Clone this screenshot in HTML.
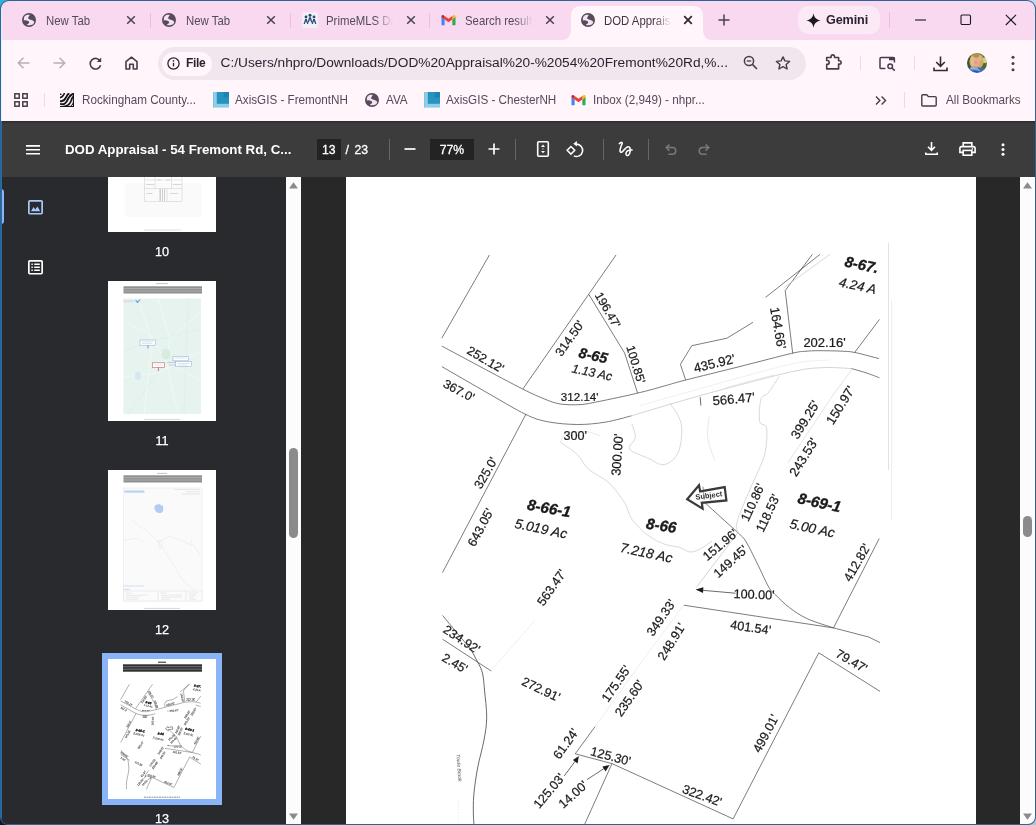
<!DOCTYPE html>
<html>
<head>
<meta charset="utf-8">
<title>DOD Appraisal</title>
<style>
*{box-sizing:border-box;margin:0;padding:0}
html,body{width:1036px;height:825px;overflow:hidden;background:#10151a;font-family:"Liberation Sans",sans-serif;}
#win{position:absolute;left:0;top:0;width:1036px;height:825px;overflow:hidden;background:#2c6496;border-radius:9px 9px 8px 8px}
#inner{position:absolute;left:1px;top:1px;width:1034px;height:823px;overflow:hidden;border-radius:8px 8px 7px 7px;background:#282828;}
.abs{position:absolute}
svg{position:absolute;overflow:visible}
/* all coordinates inside #inner are screenshot coords minus (1,1) -> use #o wrapper shifted */
#o{position:absolute;left:-1px;top:-1px;width:1036px;height:825px;opacity:0.9999}
/* ---------- tab strip ---------- */
#tabstrip{position:absolute;left:0;top:0;width:1036px;height:40px;background:#f8d9f0;}
.tabtxt{position:absolute;top:13px;height:16px;line-height:16px;font-size:12.2px;color:#544a5a;white-space:nowrap;overflow:hidden;letter-spacing:0;transform:scaleX(0.934);transform-origin:0 50%}
.tsep{position:absolute;top:13px;width:1px;height:15px;background:#eabfde}
.tx{position:absolute;top:15px;width:10px;height:10px}
/* ---------- toolbar ---------- */
#toolbar{position:absolute;left:0;top:40px;width:1036px;height:44px;background:#fff5fa;}
#bookmarks{position:absolute;left:0;top:84px;width:1036px;height:37px;background:#fff5fa;}
.bmtxt{position:absolute;top:91.8px;height:16px;line-height:16px;font-size:12.2px;color:#544a5a;white-space:nowrap;letter-spacing:0;transform:scaleX(0.958);transform-origin:0 50%}
/* ---------- pdf ---------- */
#pdfbar{position:absolute;left:0;top:121px;width:1036px;height:56px;background:#3c3c3c;}
#side{position:absolute;left:0;top:177px;width:286px;height:648px;background:#292a2d;overflow:hidden}
#sscroll{position:absolute;left:286px;top:177px;width:15px;height:648px;background:#fcfcfc}
#main{position:absolute;left:301px;top:177px;width:719px;height:648px;background:#282828;overflow:hidden}
#mscroll{position:absolute;left:1020px;top:177px;width:15px;height:648px;background:#fcfcfc}
#page{position:absolute;left:346px;top:177px;width:630px;height:648px;background:#fff;overflow:hidden}
.thumb{position:absolute;left:108px;width:108px;height:140px;background:#fff;overflow:hidden}
.tlabel{position:absolute;left:108px;width:108px;text-align:center;font-size:12.7px;line-height:14px;color:#fff;-webkit-text-stroke:0.25px #fff}
.sthumb{position:absolute;background:#8b8b8b;border-radius:5px}
.pt{position:absolute;color:#fff;white-space:nowrap}
</style>
</head>
<body>
<div class="abs" style="left:0;top:0;width:10px;height:10px;background:#2bb3de"></div><div class="abs" style="left:1026px;top:0;width:10px;height:10px;background:#c4d6f2"></div><div class="abs" style="left:0;top:815px;width:10px;height:10px;background:#0c1a22"></div><div class="abs" style="left:1026px;top:815px;width:10px;height:10px;background:#a9c9e8"></div>
<div id="win"><div id="inner"><div id="o">
<svg width="0" height="0" style="position:absolute">
 <defs>
  <symbol id="globe" viewBox="0 0 14 14">
    <circle cx="7" cy="7" r="7" fill="#564a5b"/>
    <path d="M1.9 6.4 C2.0 6.0 1.8 4.5 2.3 3.8 C2.8 3.1 3.7 2.3 4.6 2.0 C5.5 1.7 7.2 1.6 7.6 1.9 C8.0 2.2 7.0 3.0 6.8 3.6 C6.6 4.2 6.0 4.7 6.2 5.2 C6.4 5.7 6.9 6.1 7.8 6.6 C8.7 7.0 10.7 7.4 11.4 7.9 C12.1 8.4 12.2 8.8 12.1 9.4 C12.0 10.0 11.4 11.0 10.6 11.5 C9.8 12.0 7.9 12.3 7.0 12.3 C6.1 12.3 5.0 12.1 5.0 11.7 C5.0 11.3 6.7 10.7 7.0 10.1 C7.3 9.5 7.1 8.8 6.6 8.3 C6.1 7.9 5.0 7.6 4.2 7.4 C3.4 7.2 2.3 7.6 1.9 7.4 C1.5 7.2 1.9 6.6 1.9 6.4Z" fill="#f4e1f1"/>
  </symbol>
  <symbol id="xclose" viewBox="0 0 10 10">
    <path d="M1.2 1.2 L8.8 8.8 M8.8 1.2 L1.2 8.8" stroke="#4b3f52" stroke-width="1.5" fill="none"/>
  </symbol>
  <symbol id="gmail" viewBox="0 0 16 12">
    <path d="M0 1.6 L0 11 Q0 12 1 12 L3.6 12 L3.6 5.0 Z" fill="#4285f4"/>
    <path d="M16 1.6 L16 11 Q16 12 15 12 L12.4 12 L12.4 5.0 Z" fill="#34a853"/>
    <path d="M0 1.6 Q0 0 1.6 0 Q2.2 0 2.8 .5 L3.6 1.1 L3.6 5.0 L0 2.4Z" fill="#c5221f"/>
    <path d="M16 1.6 Q16 0 14.4 0 Q13.8 0 13.2 .5 L12.4 1.1 L12.4 5.0 L16 2.4Z" fill="#fbbc04"/>
    <path d="M3.6 1.1 L8 4.4 L12.4 1.1 L12.4 5.0 L8 8.3 L3.6 5.0Z" fill="#ea4335"/>
  </symbol>
 </defs>
</svg>
<div id="tabstrip">
  <div class="abs" style="left:0;top:0;width:1036px;height:1px;background:#2c6496"></div>
  <!-- tab 1 -->
  <svg style="left:22px;top:13px" width="14" height="14"><use href="#globe"/></svg>
  <div class="tabtxt" style="left:45.5px;width:72.3px">New Tab</div>
  <svg style="left:126px;top:15px" width="10" height="10"><use href="#xclose"/></svg>
  <div class="tsep" style="left:149.5px"></div>
  <!-- tab 2 -->
  <svg style="left:162px;top:13px" width="14" height="14"><use href="#globe"/></svg>
  <div class="tabtxt" style="left:185.5px;width:72.3px">New Tab</div>
  <svg style="left:266px;top:15px" width="10" height="10"><use href="#xclose"/></svg>
  <div class="tsep" style="left:290px"></div>
  <!-- tab 3 PrimeMLS -->
  <div class="abs" style="left:301.5px;top:12px;width:16px;height:15.5px;background:#f5eef9;border-radius:2px"></div>
  <svg style="left:303px;top:13px" width="14" height="13" viewBox="0 0 14 13">
    <g fill="#1f4e72">
      <circle cx="3" cy="4" r="1.4"/><circle cx="7" cy="2.2" r="1.5"/><circle cx="11" cy="4" r="1.4"/>
      <path d="M0.6 11 L2.2 6 L3.8 6 L5.4 11 L4.2 11 L3 8 L1.8 11Z"/>
      <path d="M4.6 9.6 L6.1 4.2 L7.9 4.2 L9.4 9.6 L8.2 9.6 L7 6.2 L5.8 9.6Z"/>
      <path d="M8.6 11 L10.2 6 L11.8 6 L13.4 11 L12.2 11 L11 8 L9.8 11Z"/>
    </g>
  </svg>
  <div class="tabtxt" style="left:325.5px;width:72.3px;-webkit-mask-image:linear-gradient(90deg,#000 72%,transparent 100%);mask-image:linear-gradient(90deg,#000 72%,transparent 100%)">PrimeMLS Da</div>
  <svg style="left:405.5px;top:15px" width="10" height="10"><use href="#xclose"/></svg>
  <div class="tsep" style="left:429px"></div>
  <!-- tab 4 gmail -->
  <svg style="left:440.5px;top:15px" width="15" height="10.5"><use href="#gmail"/></svg>
  <div class="tabtxt" style="left:464.5px;width:72.3px;-webkit-mask-image:linear-gradient(90deg,#000 75%,transparent 100%);mask-image:linear-gradient(90deg,#000 75%,transparent 100%)">Search results</div>
  <svg style="left:544.5px;top:15px" width="10" height="10"><use href="#xclose"/></svg>
  <!-- active tab -->
  <svg style="left:561px;top:6px" width="152" height="34" viewBox="0 0 152 34">
    <path d="M0 34 Q10 34 10 24 L10 10 Q10 0 20 0 L132 0 Q142 0 142 10 L142 24 Q142 34 152 34 Z" fill="#fff5fa"/>
  </svg>
  <svg style="left:581px;top:13px" width="14" height="14"><use href="#globe"/></svg>
  <div class="tabtxt" style="left:603.5px;width:72.3px;color:#3f3644;-webkit-mask-image:linear-gradient(90deg,#000 75%,transparent 100%);mask-image:linear-gradient(90deg,#000 75%,transparent 100%)">DOD Appraisal</div>
  <svg style="left:683px;top:15px" width="10" height="10"><path d="M1.2 1.2 L8.8 8.8 M8.8 1.2 L1.2 8.8" stroke="#2e2633" stroke-width="1.7" fill="none"/></svg>
  <!-- new tab + -->
  <svg style="left:718px;top:14px" width="12" height="12"><path d="M6 0.5 V11.5 M0.5 6 H11.5" stroke="#4b3f52" stroke-width="1.5" fill="none"/></svg>
  <!-- gemini -->
  <div class="abs" style="left:798px;top:6px;width:82px;height:28px;border-radius:10px;background:#fce9f6"></div>
  <svg style="left:806px;top:12.5px" width="15" height="15" viewBox="0 0 16 16"><path d="M8 0 C8.4 4.6 11.4 7.6 16 8 C11.4 8.4 8.4 11.4 8 16 C7.6 11.4 4.6 8.4 0 8 C4.6 7.6 7.6 4.6 8 0Z" fill="#1d1722"/></svg>
  <div class="abs" style="left:826px;top:12px;height:16px;line-height:16px;font-size:12.6px;font-weight:bold;color:#2a2230;letter-spacing:-0.1px">Gemini</div>
  <div class="tsep" style="left:888.5px;top:12px;height:16px"></div>
  <!-- window controls -->
  <svg style="left:915px;top:19px" width="12" height="2"><path d="M0 1 H11" stroke="#1d1722" stroke-width="1.1"/></svg>
  <svg style="left:960px;top:14px" width="12" height="12"><rect x="1" y="1" width="9.5" height="9.5" rx="1.2" fill="none" stroke="#1d1722" stroke-width="1.1"/></svg>
  <svg style="left:1005px;top:14px" width="12" height="12"><path d="M0.8 0.8 L11 11 M11 0.8 L0.8 11" stroke="#1d1722" stroke-width="1.1" fill="none"/></svg>
</div>
<div id="toolbar">
  <!-- back / forward (disabled) -->
  <svg style="left:17px;top:17px" width="13" height="12" viewBox="0 0 13 12"><path d="M12.5 6 H1.5 M6.5 0.8 L1.3 6 L6.5 11.2" stroke="#b9aeba" stroke-width="1.5" fill="none"/></svg>
  <svg style="left:52.5px;top:17px" width="13" height="12" viewBox="0 0 13 12"><path d="M0.5 6 H11.5 M6.5 0.8 L11.7 6 L6.5 11.2" stroke="#b9aeba" stroke-width="1.5" fill="none"/></svg>
  <!-- reload -->
  <svg style="left:89px;top:16.5px" width="13" height="13" viewBox="0 0 13 13"><path d="M11.2 4.2 A5.3 5.3 0 1 0 11.6 8.2" stroke="#463c4c" stroke-width="1.6" fill="none"/><path d="M12.2 0.6 V5 H7.8 Z" fill="#463c4c"/></svg>
  <!-- home -->
  <svg style="left:124.5px;top:16px" width="13" height="14" viewBox="0 0 13 14"><path d="M1 13 V5.6 L6.5 1.2 L12 5.6 V13 H8.3 V8.2 H4.7 V13 Z" stroke="#463c4c" stroke-width="1.6" fill="none" stroke-linejoin="round"/></svg>
  <!-- url pill -->
  <div class="abs" style="left:158px;top:7px;width:648px;height:33px;border-radius:16.5px;background:#f1e6ee"></div>
  <div class="abs" style="left:162px;top:11.5px;width:50px;height:24px;border-radius:12px;background:#fff5fa"></div>
  <svg style="left:167px;top:16.5px" width="13" height="13" viewBox="0 0 13 13"><circle cx="6.5" cy="6.5" r="5.6" stroke="#2a2230" stroke-width="1.3" fill="none"/><path d="M6.5 5.8 V9.4" stroke="#2a2230" stroke-width="1.4"/><circle cx="6.5" cy="3.8" r="0.85" fill="#2a2230"/></svg>
  <div class="abs" style="left:186px;top:15px;height:16px;line-height:16px;font-size:12px;font-weight:bold;color:#2a2230;letter-spacing:-0.3px">File</div>
  <div id="url" class="abs" style="left:220.5px;top:14px;height:18px;line-height:18px;font-size:13.7px;color:#2a2230;white-space:nowrap;letter-spacing:0">C:/Users/nhpro/Downloads/DOD%20Appraisal%20-%2054%20Fremont%20Rd,%...</div>
  <!-- zoom icon -->
  <svg style="left:743px;top:14.5px" width="15" height="15" viewBox="0 0 15 15"><circle cx="6" cy="6" r="4.6" stroke="#463c4c" stroke-width="1.5" fill="none"/><path d="M9.4 9.4 L14 14" stroke="#463c4c" stroke-width="1.6"/><path d="M3.8 6 H8.2" stroke="#463c4c" stroke-width="1.3"/></svg>
  <!-- star -->
  <svg style="left:775px;top:15px" width="16" height="15" viewBox="0 0 16 15"><path d="M8 1.9 L9.9 5.9 L14.6 6.4 L11.1 9.5 L12.1 14 L8 11.7 L3.9 14 L4.9 9.5 L1.4 6.4 L6.1 5.9 Z" stroke="#463c4c" stroke-width="1.4" fill="none" stroke-linejoin="round"/></svg>
  <!-- extensions puzzle -->
  <svg style="left:825px;top:13px" width="17" height="17" viewBox="0 0 17 17"><path d="M1.7 4.5 H6.1 V3.6 A1.7 1.7 0 0 1 9.5 3.6 V4.5 H13.6 V7.7 H14.4 A1.7 1.7 0 0 1 14.4 11.1 H13.6 V15.9 H1.7 V11.3 H2.3 A1.9 1.9 0 0 0 2.3 7.5 H1.7 Z" stroke="#463c4c" stroke-width="1.6" fill="none" stroke-linejoin="round"/></svg>
  <div class="abs" style="left:859.5px;top:16px;width:1px;height:14px;background:#efd9e9"></div>
  <!-- media search -->
  <svg style="left:879px;top:15.5px" width="17" height="15" viewBox="0 0 17 15"><path d="M6.4 12.6 H2.2 Q1 12.6 1 11.4 V2.6 Q1 1.4 2.2 1.4 H14.2 Q15.4 1.4 15.4 2.6 V6.4" stroke="#463c4c" stroke-width="1.5" fill="none"/><path d="M10 0.9 H14.4 Q15.9 0.9 15.9 2.4 V4.2 H10Z" fill="#463c4c"/><circle cx="11.2" cy="10.3" r="2.3" stroke="#463c4c" stroke-width="1.5" fill="none"/><path d="M12.9 12 L15.8 14.6" stroke="#463c4c" stroke-width="1.6"/></svg>
  <div class="abs" style="left:913.5px;top:16px;width:1px;height:14px;background:#efd9e9"></div>
  <!-- download -->
  <svg style="left:933px;top:15.5px" width="15" height="16" viewBox="0 0 15 16"><path d="M7.5 0.5 V10 M3.2 6 L7.5 10.3 L11.8 6" stroke="#332a38" stroke-width="1.6" fill="none"/><path d="M1 11.5 V14.5 H14 V11.5" stroke="#332a38" stroke-width="1.6" fill="none"/></svg>
  <!-- avatar -->
  <svg style="left:967px;top:13px" width="20" height="20" viewBox="0 0 20 20">
    <defs><clipPath id="avc"><circle cx="10" cy="10" r="10"/></clipPath><filter id="avb" x="-10%" y="-10%" width="120%" height="120%"><feGaussianBlur stdDeviation="0.7"/></filter></defs>
    <g clip-path="url(#avc)"><g filter="url(#avb)">
      <rect x="-2" y="-2" width="24" height="24" fill="#5f7440"/>
      <rect x="-2" y="-2" width="6" height="24" fill="#3f5230"/>
      <ellipse cx="17.4" cy="7.6" rx="2.6" ry="3.2" fill="#c9d486"/>
      <ellipse cx="17.6" cy="13" rx="2.4" ry="3" fill="#4c6a3a"/>
      <ellipse cx="9.4" cy="8.4" rx="7" ry="8" fill="#cfa862"/>
      <ellipse cx="6" cy="8" rx="2.6" ry="5" fill="#dcc088"/>
      <ellipse cx="13" cy="5" rx="2.6" ry="3" fill="#d9b87c"/>
      <ellipse cx="9" cy="2.6" rx="3.4" ry="1.8" fill="#b98a4a"/>
      <ellipse cx="9.6" cy="9.2" rx="3" ry="4.2" fill="#eaa88e"/>
      <ellipse cx="8.8" cy="9.6" rx="1.2" ry="1" fill="#d98c84"/>
      <path d="M-1 22 L1.5 15.6 Q9 12.6 16 15.6 L20 22Z" fill="#3e6dbd"/>
      <ellipse cx="7" cy="15.4" rx="4" ry="1.3" fill="#8fb0e4"/>
      <ellipse cx="10.6" cy="17.2" rx="2.2" ry="1.2" fill="#7ea2e0"/>
      <ellipse cx="9" cy="19" rx="3" ry="1.4" fill="#2f56a8"/>
    </g></g>
  </svg>
  <!-- kebab -->
  <svg style="left:1010.5px;top:14.5px" width="4" height="17" viewBox="0 0 4 17"><circle cx="2" cy="2.2" r="1.5" fill="#463c4c"/><circle cx="2" cy="8.5" r="1.5" fill="#463c4c"/><circle cx="2" cy="14.8" r="1.5" fill="#463c4c"/></svg>
</div>
<div id="bookmarks" style="top:84px"></div>
<!-- bookmarks content in screenshot coords -->
<svg style="left:14px;top:93px" width="14" height="14" viewBox="0 0 14 14"><g stroke="#463c4c" stroke-width="1.5" fill="none"><rect x="0.8" y="0.8" width="4.4" height="4.4"/><rect x="8.8" y="0.8" width="4.4" height="4.4"/><rect x="0.8" y="8.8" width="4.4" height="4.4"/><rect x="8.8" y="8.8" width="4.4" height="4.4"/></g></svg>
<div class="abs" style="left:43.5px;top:93px;width:1px;height:14px;background:#efd9e9"></div>
<!-- rockingham icon -->
<svg style="left:60px;top:93px" width="14" height="14" viewBox="0 0 14 14">
  <defs><clipPath id="rkc"><rect width="14" height="14"/></clipPath></defs>
  <g clip-path="url(#rkc)">
  <rect width="14" height="14" fill="#fbf7f9"/>
  <g stroke="#17131a" fill="none" stroke-linecap="butt">
    <path d="M0 1.2 L1.4 1.4" stroke-width="1.4"/>
    <path d="M0 4.6 C1.8 4.6 3.0 3.2 4.6 0.2" stroke-width="1.7"/>
    <path d="M0 8.0 C2.6 9.0 4.6 7.4 6.2 4.2 C7.2 2.2 8.0 1.0 9.2 0.2" stroke-width="1.9"/>
    <path d="M0 10.8 C3.2 12.0 5.8 10.6 7.6 6.8 C9.0 3.8 10.0 1.4 14 0.7" stroke-width="1.9"/>
  </g>
  <path d="M14 3.4 C12.2 3.6 11.8 5.4 11.0 8.0 C9.8 11.4 7.0 13.2 3.4 13.6" stroke="#17131a" stroke-width="1.7" fill="none"/>
  <path d="M0 13.5 H14 M13.4 1.6 V14" stroke="#17131a" stroke-width="1.1" fill="none"/>
  <path d="M8.6 14 C11 12.8 12.6 11 13.4 8.4 L14 8.4 L14 14Z" fill="#17131a"/>
  <circle cx="12.3" cy="12.4" r="0.55" fill="#fbf7f9"/>
  </g>
</svg>
<div class="bmtxt" style="left:81.5px">Rockingham County...</div>
<!-- axisgis 1 -->
<svg style="left:213px;top:92.2px" width="16" height="15.6" viewBox="0 0 16 15.6"><rect width="16" height="15.6" fill="#8dcfe8"/><rect x="3.8" y="0" width="12.2" height="11.8" fill="#2793be"/><rect x="10.6" y="0" width="5.4" height="5.6" fill="#1c84b4"/><rect x="0" y="0" width="0.7" height="15.6" fill="#7fbfd8"/></svg>
<div class="bmtxt" style="left:235px">AxisGIS - FremontNH</div>
<!-- AVA globe -->
<svg style="left:365px;top:93px" width="14" height="14"><use href="#globe"/></svg>
<div class="bmtxt" style="left:385.5px">AVA</div>
<!-- axisgis 2 -->
<svg style="left:424px;top:92.2px" width="16" height="15.6" viewBox="0 0 16 15.6"><rect width="16" height="15.6" fill="#8dcfe8"/><rect x="3.8" y="0" width="12.2" height="11.8" fill="#2793be"/><rect x="10.6" y="0" width="5.4" height="5.6" fill="#1c84b4"/><rect x="0" y="0" width="0.7" height="15.6" fill="#7fbfd8"/></svg>
<div class="bmtxt" style="left:446px">AxisGIS - ChesterNH</div>
<!-- gmail -->
<svg style="left:571px;top:95px" width="15" height="10.5"><use href="#gmail"/></svg>
<div class="bmtxt" style="left:593px">Inbox (2,949) - nhpr...</div>
<!-- chevrons -->
<svg style="left:875px;top:95.5px" width="12" height="9" viewBox="0 0 12 9"><path d="M1 0.6 L4.9 4.5 L1 8.4 M6.6 0.6 L10.5 4.5 L6.6 8.4" stroke="#463c4c" stroke-width="1.4" fill="none"/></svg>
<div class="abs" style="left:903.5px;top:92px;width:1px;height:16px;background:#efd9e9"></div>
<!-- folder -->
<svg style="left:921px;top:94px" width="16" height="13" viewBox="0 0 16 13"><path d="M0.8 1.8 Q0.8 0.8 1.8 0.8 H5.8 L7.4 2.6 H14.2 Q15.2 2.6 15.2 3.6 V11 Q15.2 12 14.2 12 H1.8 Q0.8 12 0.8 11 Z" stroke="#463c4c" stroke-width="1.4" fill="none" stroke-linejoin="round"/></svg>
<div class="bmtxt" style="left:945.5px">All Bookmarks</div>
<div id="pdfbar">
  <div class="abs" style="left:0;top:0;width:1036px;height:3px;background:linear-gradient(#2c2c2c,#3c3c3c)"></div>
</div>
<!-- pdf toolbar content: screenshot coords -->
<svg style="left:26px;top:144.5px" width="14" height="10" viewBox="0 0 14 10"><path d="M0 0.9 H14 M0 4.8 H14 M0 8.7 H14" stroke="#fff" stroke-width="1.6"/></svg>
<div id="ptitle" class="pt" style="left:65px;top:141px;height:18px;line-height:18px;font-size:13.3px;font-weight:bold;letter-spacing:0">DOD Appraisal - 54 Fremont Rd, C...</div>
<div class="abs" style="left:317px;top:139px;width:24px;height:21px;background:#232323"></div>
<div class="pt" style="left:322px;top:142px;-webkit-text-stroke:0.3px #fff;height:17px;line-height:17px;font-size:12.2px">13</div>
<div class="pt" style="left:345.5px;top:142px;-webkit-text-stroke:0.3px #fff;height:17px;line-height:17px;font-size:12.2px;word-spacing:2.3px">/ 23</div>
<div class="abs" style="left:389px;top:139px;width:1px;height:21px;background:#666"></div>
<svg style="left:404px;top:147.7px" width="12" height="2"><path d="M0.5 1 H11.5" stroke="#fff" stroke-width="1.7"/></svg>
<div class="abs" style="left:430px;top:139px;width:44px;height:21px;background:#232323"></div>
<div class="pt" style="left:430px;width:44px;text-align:center;top:142px;-webkit-text-stroke:0.3px #fff;height:17px;line-height:17px;font-size:12.2px">77%</div>
<svg style="left:488px;top:142.7px" width="12" height="12"><path d="M6 0.5 V11.5 M0.5 6 H11.5" stroke="#fff" stroke-width="1.7" fill="none"/></svg>
<div class="abs" style="left:514.5px;top:139px;width:1px;height:21px;background:#666"></div>
<!-- fit page -->
<svg style="left:536px;top:140px" width="14" height="18" viewBox="0 0 14 18"><rect x="1.7" y="1.7" width="10.6" height="14.5" rx="1.1" stroke="#fff" stroke-width="1.6" fill="none"/><path d="M7 4.6 L9.0 7.0 H5.0Z M7 13.3 L9.0 10.9 H5.0Z" fill="#fff"/><path d="M6 8.9 H8" stroke="#bbb" stroke-width="0.8"/></svg>
<!-- rotate -->
<svg style="left:566px;top:141px" width="18" height="17" viewBox="0 0 18 17"><path d="M4.95 5.5 L8.75 9.3 L4.95 13.1 L1.15 9.3Z" stroke="#fff" stroke-width="1.5" fill="none" stroke-linejoin="miter"/><path d="M10.4 3.1 A6.2 6.2 0 1 1 7.8 14.9" stroke="#fff" stroke-width="1.6" fill="none"/><path d="M10.9 0 V5.4 L7.3 2.7Z" fill="#fff"/></svg>
<div class="abs" style="left:603px;top:139px;width:1px;height:21px;background:#666"></div>
<!-- draw squiggle -->
<svg style="left:617px;top:141px" width="17" height="16" viewBox="0 0 17 16"><path d="M2.3 2.6 C2.6 2.4 3.7 1.5 4.2 1.4 C4.7 1.3 5.2 1.5 5.2 2.2 C5.2 2.9 4.4 4.2 4.0 5.4 C3.6 6.6 3.1 8.4 3.0 9.4 C2.9 10.4 3.2 10.9 3.6 11.2 C4.0 11.4 4.5 11.4 5.2 10.9 C5.9 10.4 6.9 9.0 7.8 8.2 C8.7 7.4 9.7 6.2 10.4 5.9 C11.2 5.6 11.8 5.8 12.3 6.2 C12.8 6.6 13.2 7.5 13.3 8.4 C13.4 9.3 13.2 10.6 12.9 11.6 C12.6 12.6 11.8 13.9 11.2 14.3 C10.6 14.7 9.9 14.5 9.5 14.2 C9.1 13.9 8.9 13.1 9.0 12.4 C9.1 11.7 9.6 10.7 10.2 10.2 C10.8 9.7 11.8 9.5 12.6 9.3 C13.4 9.1 14.7 9.1 15.1 9.0" stroke="#fff" stroke-width="1.55" fill="none" stroke-linecap="round" stroke-linejoin="round"/></svg>
<div class="abs" style="left:648px;top:139px;width:1px;height:21px;background:#666"></div>
<!-- undo / redo (disabled) -->
<svg style="left:664.5px;top:144px" width="13" height="11" viewBox="0 0 13 11"><path d="M1.6 3.6 H8.2 A3.4 3.4 0 0 1 8.2 10.2 H3.4" stroke="#787878" stroke-width="1.5" fill="none"/><path d="M4.4 0.6 L1.2 3.6 L4.4 6.6" stroke="#787878" stroke-width="1.5" fill="none"/></svg>
<svg style="left:696.5px;top:144px" width="13" height="11" viewBox="0 0 13 11"><path d="M11.4 3.6 H4.8 A3.4 3.4 0 0 0 4.8 10.2 H9.6" stroke="#787878" stroke-width="1.5" fill="none"/><path d="M8.6 0.6 L11.8 3.6 L8.6 6.6" stroke="#787878" stroke-width="1.5" fill="none"/></svg>
<!-- download / print / kebab -->
<svg style="left:924.5px;top:142px" width="13" height="13" viewBox="0 0 13 13"><path d="M6.5 0 V8 M3 4.8 L6.5 8.3 L10 4.8" stroke="#fff" stroke-width="1.6" fill="none"/><path d="M0.8 10.4 V12.2 H12.2 V10.4" stroke="#fff" stroke-width="1.6" fill="none"/></svg>
<svg style="left:958.5px;top:142px" width="17" height="14" viewBox="0 0 17 14"><path d="M4.2 4.6 V0.9 H12.8 V4.6" stroke="#fff" stroke-width="1.6" fill="none"/><path d="M4.2 10.4 H0.9 V6.4 Q0.9 4.6 2.7 4.6 H14.3 Q16.1 4.6 16.1 6.4 V10.4 H12.8" stroke="#fff" stroke-width="1.6" fill="none"/><rect x="4.2" y="8.4" width="8.6" height="4.8" stroke="#fff" stroke-width="1.6" fill="none"/><circle cx="13.4" cy="6.9" r="0.8" fill="#fff"/></svg>
<svg style="left:1001px;top:142.5px" width="4" height="13" viewBox="0 0 4 13"><circle cx="2" cy="1.8" r="1.5" fill="#fff"/><circle cx="2" cy="6.5" r="1.5" fill="#fff"/><circle cx="2" cy="11.2" r="1.5" fill="#fff"/></svg>
<div id="leftedge" class="abs" style="left:1px;top:121px;width:1px;height:704px;background:#2b6aa2;z-index:5"></div>
<div class="abs" style="left:1px;top:8px;width:1px;height:113px;background:#e4f0fc;z-index:5"></div>
<div id="side">
<div class="abs" style="left:1px;top:12px;width:3px;height:35px;background:#8ab4f8;border-radius:0 3px 3px 0"></div>
</div>
<svg style="left:27.6px;top:199.6px" width="15" height="14.6" viewBox="0 0 15 14.6"><rect x="0.85" y="0.85" width="13.3" height="12.9" rx="0.9" stroke="#a8c7fa" stroke-width="1.7" fill="none"/><path d="M3.0 11.2 L5.6 7.0 L7.3 9.6 L9.4 6.4 L12.2 11.2Z" fill="#a8c7fa"/></svg>
<svg style="left:27.6px;top:259.8px" width="15" height="14.6" viewBox="0 0 15 14.6"><rect x="0.85" y="0.85" width="13.3" height="12.9" rx="0.9" stroke="#fff" stroke-width="1.7" fill="none"/><path d="M3.4 4.3 H4.8 M6.2 4.3 H11.8 M3.4 7.3 H4.8 M6.2 7.3 H11.8 M3.4 10.3 H4.8 M6.2 10.3 H11.8" stroke="#fff" stroke-width="1.5"/></svg>
<div class="thumb" style="top:92px;height:140px;clip-path:inset(85px 0 0 0)">
<div class="abs" style="left:17px;top:91px;width:77px;height:34px;background:#fafafa"></div>
<svg style="left:0;top:0" width="108" height="140" viewBox="0 0 108 140"><g stroke="#d4d4d4" stroke-width="0.6" fill="none"><rect x="36.5" y="60" width="37.5" height="49.5"/><path d="M36.5 88 H74 M36.5 96.5 H74 M47 60 V96.5 M63.5 60 V96.5 M51.5 96.5 V109.5 M59 96.5 V109.5"/></g><g stroke="#cbcbcb" stroke-width="0.9"><path d="M52.5 97 V109 M54.5 97 V109 M56.5 97 V109"/><path d="M38 92.5 H46 M64.5 92.5 H73.5 M38.5 101.5 H44.5 M62 101.5 H70 M49 88 H53 M58 88 H62" stroke="#d2d2d2"/></g><path d="M36 138 H73" stroke="#bbb" stroke-width="0.5"/></svg>
</div>
<div class="tlabel" style="top:244.5px">10</div>
<div class="thumb" style="top:281px">
<svg style="left:0;top:0" width="108" height="140" viewBox="0 0 108 140">
<path d="M48 2.6 H60" stroke="#999" stroke-width="0.6"/>
<rect x="15.5" y="5.3" width="78.5" height="7.2" fill="#8f8f8f"/><path d="M15.5 7.6 H94 M15.5 10 H94" stroke="#cfcfcf" stroke-width="0.5"/>
<rect x="15.5" y="17.5" width="77.5" height="115.5" fill="#e6f3ee"/>
<g stroke="#f4fbf8" stroke-width="0.7" fill="none"><path d="M15.5 40 L40 52 L58 80 L93 100 M30 17.5 L44 60 L36 133 M93 30 L62 58 L58 80 L70 133 M15.5 96 L50 92 L93 70 M50 17.5 L62 58"/></g>
<g stroke="#d8ebe6" stroke-width="0.5" fill="none"><path d="M15.5 70 L44 60 L93 48 M20 133 L58 80 M80 17.5 L76 133"/></g>
<ellipse cx="58" cy="73" rx="4.5" ry="5.5" fill="#d7ecdf"/>
<ellipse cx="30" cy="95" rx="3" ry="4" fill="#d3e8f2"/>
<rect x="15.5" y="18.8" width="11" height="2.6" fill="#d3e6f2"/><path d="M27.6 19 L29.4 21.4 L32 18.6" stroke="#5aa0d8" stroke-width="1.1" fill="none"/><rect x="15.5" y="19.4" width="6" height="1.4" fill="#f3dcc0"/>
<g fill="#fff" stroke="#94add6" stroke-width="0.55"><rect x="32" y="59" width="15.5" height="5.2"/><rect x="65" y="75.3" width="15.2" height="4.5"/><rect x="67.6" y="80.6" width="16" height="5"/></g>
<path d="M40 64.2 V67.6" stroke="#5f86c6" stroke-width="0.8"/><path d="M59 81.5 H67.6 M61 84 H67.6" stroke="#9ab4da" stroke-width="0.6"/>
<rect x="44.6" y="81.8" width="12" height="4.8" fill="#fff" stroke="#c9605c" stroke-width="0.6"/><path d="M50.4 86.6 V90" stroke="#c9605c" stroke-width="0.8"/>
<path d="M34 60.8 H45.5 M34 62.4 H44 M67 77 H78.5 M69.6 82.4 H81.6 M69.6 84 H80 M46.6 84 H54.6" stroke="#b9c6de" stroke-width="0.5"/>
<path d="M36 138.4 H72" stroke="#aaa" stroke-width="0.5"/>
</svg></div>
<div class="tlabel" style="top:433.5px">11</div>
<div class="thumb" style="top:470px">
<svg style="left:0;top:0" width="108" height="140" viewBox="0 0 108 140">
<path d="M49 3.4 H59" stroke="#999" stroke-width="0.6"/>
<rect x="15.5" y="5.3" width="78.5" height="7.2" fill="#8f8f8f"/><path d="M15.5 7.6 H94 M15.5 10 H94" stroke="#cfcfcf" stroke-width="0.5"/>
<rect x="15.5" y="18" width="78.5" height="113" fill="#fafafb" stroke="#e4e4e8" stroke-width="0.5"/>
<rect x="16.4" y="20.4" width="20" height="2.3" fill="#b9d6ee"/><path d="M66 19.5 H92 M78 21.8 H92 M74 24 H92" stroke="#d9d9dd" stroke-width="0.6"/>
<path d="M46.5 39 Q46 35 49.5 34.6 Q51 33 52.5 35 Q55.5 35 55.2 39 Q55.6 42.6 52 43 Q48 43.4 46.5 39Z" fill="#b3ccf3"/>
<g stroke="#e9e9ed" stroke-width="0.7" fill="none"><path d="M22 49 L40 62 L50 72 L60 86 L76 112 L93 126 M50 72 L62 66 L72 70 L86 76 L92 84 M16 70 L30 68 L36 72 M54 70 V78 H51 V70Z M84 70 L82 76"/></g>
<path d="M15.5 116 H36" stroke="#b9d3ea" stroke-width="0.7"/><path d="M15.5 119.4 H22" stroke="#b9d3ea" stroke-width="0.7"/>
<rect x="15.5" y="121" width="78.5" height="10" fill="#fbfbfc" stroke="#e0e0e4" stroke-width="0.5"/>
<g stroke="#d6d6da" stroke-width="0.5"><path d="M18 123 H24 M18 125.2 H40 M18 127.2 H32 M18 129.2 H30 M52 123 H58 M53 125.2 H74 M53 127.2 H74 M53 129.2 H62 M80 123 H90 M81 125.2 H88 M81 127.2 H86 M81 129.2 H88 M50 121 V131 M78 121 V131"/></g>
<path d="M36 138.4 H72" stroke="#aaa" stroke-width="0.5"/>
</svg></div>
<div class="tlabel" style="top:622.5px">12</div>
<div class="abs" style="left:102px;top:653px;width:120px;height:152px;background:#8ab4f8"></div>
<div class="thumb" style="top:659px">
<svg style="left:0;top:0" width="108" height="140" viewBox="0 0 108 140">
<path d="M50 3.2 H58" stroke="#222" stroke-width="1"/>
<rect x="15" y="5.3" width="79" height="7.4" fill="#2e2e2e"/><path d="M15 7.7 H94 M15 10.2 H94" stroke="#bdbdbd" stroke-width="0.5"/>
<path d="M36 138.2 H72" stroke="#444" stroke-width="0.6" stroke-dasharray="2 0.5"/>
</svg>
<svg style="left:0;top:0" width="108" height="140" viewBox="372.6 116.7 590.5 765.4"><g font-family="Liberation Sans, sans-serif">
<path d="M489.4 255.0 L441.8 338.2" stroke="#666" stroke-width="2.8" fill="none"/>
<path d="M616.0 255.0 L523.0 388.8" stroke="#666" stroke-width="2.8" fill="none"/>
<path d="M526.0 414.0 L442.5 572.6" stroke="#666" stroke-width="2.8" fill="none"/>
<path d="M588.8 294.4 L624.6 353.0 L637.6 393.1" stroke="#666" stroke-width="2.8" fill="none"/>
<path d="M441.8 346.1 C448.2 349.5 466.5 359.3 480.0 366.5 C493.5 373.7 512.2 383.8 523.0 389.2 C533.8 394.6 538.8 396.7 545.0 399.2 C551.2 401.7 554.6 403.1 560.4 404.0 C566.2 404.9 573.8 405.0 580.0 404.6 C586.2 404.2 588.3 403.6 597.9 401.7 C607.5 399.8 626.4 395.8 637.6 393.1 C648.8 390.5 657.1 388.0 665.0 385.8 C672.9 383.6 672.5 383.4 685.0 380.2 C697.5 377.0 722.2 371.0 740.0 366.5 C757.8 362.0 780.8 355.9 791.6 353.4 C802.4 350.9 800.5 351.8 805.0 351.3 C809.5 350.9 813.0 350.7 818.8 350.7 C824.6 350.7 834.0 350.8 840.0 351.1 C846.0 351.4 848.5 351.2 855.0 352.5 C861.5 353.8 874.9 357.6 878.9 358.6" stroke="#666" stroke-width="2.8" fill="none"/>
<path d="M441.8 366.6 C449.7 371.1 475.1 385.9 489.0 393.8 C502.9 401.7 515.5 409.5 525.3 414.2 C535.1 418.9 539.3 420.1 548.0 421.8 C556.7 423.5 567.9 424.4 577.4 424.5 C586.9 424.6 596.0 423.6 605.0 422.2 C614.0 420.8 627.1 416.9 631.5 415.8" stroke="#666" stroke-width="2.8" fill="none"/>
<path d="M851.5 368.6 C853.9 369.3 861.3 371.3 866.0 372.8 C870.7 374.3 877.2 377.0 879.5 377.8" stroke="#666" stroke-width="2.8" fill="none"/>
<path d="M812.4 254.3 L785.2 290.6 L792.7 353.4" stroke="#666" stroke-width="2.8" fill="none"/>
<path d="M765.5 297.4 L820.1 254.3" stroke="#666" stroke-width="2.8" fill="none"/>
<path d="M685.6 379.8 L680.4 364.3 L691.8 345.7 L726.9 338.2 L753.0 322.3" stroke="#666" stroke-width="2.8" fill="none"/>
<path d="M879.5 319.4 L854.6 352.5" stroke="#666" stroke-width="2.8" fill="none"/>
<path d="M700.2 397.2 L700.9 405.6" stroke="#666" stroke-width="2.8" fill="none"/>
<path d="M702.0 500.1 C705.0 502.8 714.0 511.0 720.0 516.5 C726.0 522.0 733.9 528.8 738.3 533.0 C742.7 537.2 743.1 537.0 746.2 542.0 C749.3 547.0 753.2 555.4 757.0 563.0 C760.8 570.6 765.8 582.1 768.9 587.4 C772.0 592.7 772.3 591.6 775.7 595.0 C779.1 598.4 784.0 603.5 789.3 607.5 C794.6 611.5 800.0 615.4 807.4 618.8 C814.8 622.2 829.1 626.4 833.5 627.9" stroke="#666" stroke-width="2.8" fill="none"/>
<path d="M879.2 538.6 L833.5 627.9" stroke="#666" stroke-width="2.8" fill="none"/>
<path d="M699.0 590.0 L735.5 593.2" stroke="#666" stroke-width="2.8" fill="none"/>
<path d="M695.6 589.6 L703.4 587.2 L703.0 592.9Z" fill="#1c1c1c"/>
<path d="M683.8 605.2 L833.5 627.9 L868.7 637.0 L880.0 642.6" stroke="#666" stroke-width="2.8" fill="none"/>
<path d="M880.0 691.4 L818.8 652.8 L733.1 818.9" stroke="#666" stroke-width="2.8" fill="none"/>
<path d="M575.2 753.8 L612.0 763.6 L733.1 818.9" stroke="#666" stroke-width="2.8" fill="none"/>
<path d="M612.0 763.6 L586.5 820.2 L582.0 830.0" stroke="#666" stroke-width="2.8" fill="none"/>
<path d="M595.1 726.6 L575.2 753.8" stroke="#666" stroke-width="2.8" fill="none"/>
<path d="M564.2 776.0 L577.0 758.8" stroke="#666" stroke-width="2.8" fill="none"/>
<path d="M578.8 756.0 L577.6 763.6 L572.9 760.0Z" fill="#1c1c1c"/>
<path d="M587.0 779.6 L606.5 766.9" stroke="#666" stroke-width="2.8" fill="none"/>
<path d="M609.6 764.9 L605.6 771.4 L602.4 766.5Z" fill="#1c1c1c"/>
<path d="M442.5 615.4 L470.8 649.4" stroke="#666" stroke-width="2.8" fill="none"/>
<path d="M442.5 639.2 L491.2 671.0" stroke="#666" stroke-width="2.8" fill="none"/>
<path d="M470.8 649.4 C471.7 651.0 474.1 655.2 476.0 659.0 C477.9 662.8 480.8 666.9 482.2 672.1 C483.6 677.3 483.8 682.4 484.5 690.0 C485.2 697.6 486.8 709.2 486.7 717.5 C486.6 725.8 485.5 731.6 484.0 740.0 C482.5 748.4 479.3 758.8 477.6 768.0 C475.9 777.2 474.5 787.2 473.8 795.0 C473.1 802.8 473.3 809.2 473.4 815.0 C473.5 820.8 474.3 827.5 474.5 830.0" stroke="#666" stroke-width="2.8" fill="none"/>
<path d="M687.2 499.2 L699.0 485.2 L700.2 491.4 L724.7 487.1 L726.4 500.4 L701.8 502.8 L702.6 508.6 Z" stroke="#444" stroke-width="3" fill="#fff"/>
<text transform="translate(485.6 359.3) rotate(30)" font-size="14.26" text-anchor="middle" dy="0.36em" fill="#666" stroke="#666" stroke-width="0.9">252.12'</text>
<text transform="translate(459.0 390.4) rotate(28)" font-size="14.26" text-anchor="middle" dy="0.36em" fill="#666" stroke="#666" stroke-width="0.9">367.0'</text>
<text transform="translate(569.5 338.2) rotate(-55)" font-size="14.26" text-anchor="middle" dy="0.36em" fill="#666" stroke="#666" stroke-width="0.9">314.50'</text>
<text transform="translate(608.0 309.9) rotate(60)" font-size="13.799999999999999" text-anchor="middle" dy="0.36em" fill="#666" stroke="#666" stroke-width="0.9">196.47'</text>
<text transform="translate(636.0 364.3) rotate(73)" font-size="13.799999999999999" text-anchor="middle" dy="0.36em" fill="#666" stroke="#666" stroke-width="0.9">100.85'</text>
<text transform="translate(579.7 396.5) rotate(0)" font-size="13.339999999999998" text-anchor="middle" dy="0.36em" fill="#666" stroke="#666" stroke-width="0.9">312.14'</text>
<text transform="translate(778.4 328.0) rotate(80)" font-size="14.95" text-anchor="middle" dy="0.36em" fill="#666" stroke="#666" stroke-width="0.9">164.66'</text>
<text transform="translate(824.5 342.1) rotate(0)" font-size="14.95" text-anchor="middle" dy="0.36em" fill="#666" stroke="#666" stroke-width="0.9">202.16'</text>
<text transform="translate(714.4 363.2) rotate(-14)" font-size="14.95" text-anchor="middle" dy="0.36em" fill="#666" stroke="#666" stroke-width="0.9">435.92'</text>
<text transform="translate(733.7 398.8) rotate(-5)" font-size="14.95" text-anchor="middle" dy="0.36em" fill="#666" stroke="#666" stroke-width="0.9">566.47'</text>
<text transform="translate(840.3 405.1) rotate(-58)" font-size="14.95" text-anchor="middle" dy="0.36em" fill="#666" stroke="#666" stroke-width="0.9">150.97'</text>
<text transform="translate(805.0 419.5) rotate(-58)" font-size="14.95" text-anchor="middle" dy="0.36em" fill="#666" stroke="#666" stroke-width="0.9">399.25'</text>
<text transform="translate(803.4 457.0) rotate(-58)" font-size="14.95" text-anchor="middle" dy="0.36em" fill="#666" stroke="#666" stroke-width="0.9">243.53'</text>
<text transform="translate(575.2 435.4) rotate(0)" font-size="14.489999999999998" text-anchor="middle" dy="0.36em" fill="#666" stroke="#666" stroke-width="0.9">300'</text>
<text transform="translate(617.1 454.7) rotate(-86)" font-size="14.95" text-anchor="middle" dy="0.36em" fill="#666" stroke="#666" stroke-width="0.9">300.00'</text>
<text transform="translate(485.6 472.8) rotate(-60)" font-size="14.489999999999998" text-anchor="middle" dy="0.36em" fill="#666" stroke="#666" stroke-width="0.9">325.0'</text>
<text transform="translate(480.4 527.3) rotate(-62)" font-size="14.489999999999998" text-anchor="middle" dy="0.36em" fill="#666" stroke="#666" stroke-width="0.9">643.05'</text>
<text transform="translate(551.4 587.4) rotate(-55)" font-size="14.489999999999998" text-anchor="middle" dy="0.36em" fill="#666" stroke="#666" stroke-width="0.9">563.47'</text>
<text transform="translate(752.5 502.3) rotate(-65)" font-size="14.489999999999998" text-anchor="middle" dy="0.36em" fill="#666" stroke="#666" stroke-width="0.9">110.86'</text>
<text transform="translate(767.7 513.0) rotate(-65)" font-size="14.489999999999998" text-anchor="middle" dy="0.36em" fill="#666" stroke="#666" stroke-width="0.9">118.53'</text>
<text transform="translate(720.1 544.7) rotate(-40)" font-size="14.489999999999998" text-anchor="middle" dy="0.36em" fill="#666" stroke="#666" stroke-width="0.9">151.96'</text>
<text transform="translate(730.3 561.3) rotate(-42)" font-size="14.489999999999998" text-anchor="middle" dy="0.36em" fill="#666" stroke="#666" stroke-width="0.9">149.45'</text>
<text transform="translate(856.9 562.4) rotate(-60)" font-size="14.489999999999998" text-anchor="middle" dy="0.36em" fill="#666" stroke="#666" stroke-width="0.9">412.82'</text>
<text transform="translate(754.1 594.2) rotate(2)" font-size="14.489999999999998" text-anchor="middle" dy="0.36em" fill="#666" stroke="#666" stroke-width="0.9">100.00'</text>
<text transform="translate(750.7 627.2) rotate(8)" font-size="14.489999999999998" text-anchor="middle" dy="0.36em" fill="#666" stroke="#666" stroke-width="0.9">401.54'</text>
<text transform="translate(851.7 660.8) rotate(30)" font-size="14.489999999999998" text-anchor="middle" dy="0.36em" fill="#666" stroke="#666" stroke-width="0.9">79.47'</text>
<text transform="translate(765.5 733.4) rotate(-62)" font-size="14.489999999999998" text-anchor="middle" dy="0.36em" fill="#666" stroke="#666" stroke-width="0.9">499.01'</text>
<text transform="translate(671.3 641.5) rotate(-58)" font-size="14.489999999999998" text-anchor="middle" dy="0.36em" fill="#666" stroke="#666" stroke-width="0.9">248.91'</text>
<text transform="translate(661.0 617.5) rotate(-55)" font-size="14.489999999999998" text-anchor="middle" dy="0.36em" fill="#666" stroke="#666" stroke-width="0.9">349.33'</text>
<text transform="translate(461.8 639.2) rotate(33)" font-size="14.489999999999998" text-anchor="middle" dy="0.36em" fill="#666" stroke="#666" stroke-width="0.9">234.92'</text>
<text transform="translate(455.0 663.0) rotate(30)" font-size="14.489999999999998" text-anchor="middle" dy="0.36em" fill="#666" stroke="#666" stroke-width="0.9">2.45'</text>
<text transform="translate(541.1 689.1) rotate(25)" font-size="14.489999999999998" text-anchor="middle" dy="0.36em" fill="#666" stroke="#666" stroke-width="0.9">272.91'</text>
<text transform="translate(616.0 683.5) rotate(-55)" font-size="14.489999999999998" text-anchor="middle" dy="0.36em" fill="#666" stroke="#666" stroke-width="0.9">175.55'</text>
<text transform="translate(629.2 698.2) rotate(-55)" font-size="14.489999999999998" text-anchor="middle" dy="0.36em" fill="#666" stroke="#666" stroke-width="0.9">235.60'</text>
<text transform="translate(565.6 743.6) rotate(-55)" font-size="14.489999999999998" text-anchor="middle" dy="0.36em" fill="#666" stroke="#666" stroke-width="0.9">61.24'</text>
<text transform="translate(610.8 756.0) rotate(15)" font-size="14.489999999999998" text-anchor="middle" dy="0.36em" fill="#666" stroke="#666" stroke-width="0.9">125.30'</text>
<text transform="translate(548.9 790.7) rotate(-50)" font-size="14.489999999999998" text-anchor="middle" dy="0.36em" fill="#666" stroke="#666" stroke-width="0.9">125.03'</text>
<text transform="translate(572.9 794.4) rotate(-42)" font-size="14.489999999999998" text-anchor="middle" dy="0.36em" fill="#666" stroke="#666" stroke-width="0.9">14.00'</text>
<text transform="translate(702.2 795.3) rotate(20)" font-size="14.489999999999998" text-anchor="middle" dy="0.36em" fill="#666" stroke="#666" stroke-width="0.9">322.42'</text>
<text transform="translate(593.3 355.2) rotate(12)" font-size="16.674999999999997" text-anchor="middle" dy="0.36em" fill="#222" stroke="#222" stroke-width="1.6" style="font-weight:bold;font-style:italic">8-65</text>
<text transform="translate(592.2 372.2) rotate(12)" font-size="14.029999999999998" text-anchor="middle" dy="0.36em" fill="#666" stroke="#666" stroke-width="0.9" style="font-style:italic">1.13 Ac</text>
<text transform="translate(861.8 264.5) rotate(12)" font-size="17.25" text-anchor="middle" dy="0.36em" fill="#222" stroke="#222" stroke-width="1.6" style="font-weight:bold;font-style:italic">8-67.</text>
<text transform="translate(857.6 285.4) rotate(12)" font-size="15.179999999999998" text-anchor="middle" dy="0.36em" fill="#666" stroke="#666" stroke-width="0.9" style="font-style:italic">4.24 A</text>
<text transform="translate(549.1 508.0) rotate(10)" font-size="17.479999999999997" text-anchor="middle" dy="0.36em" fill="#222" stroke="#222" stroke-width="1.6" style="font-weight:bold;font-style:italic">8-66-1</text>
<text transform="translate(541.1 528.4) rotate(12)" font-size="15.639999999999999" text-anchor="middle" dy="0.36em" fill="#666" stroke="#666" stroke-width="0.9" style="font-style:italic">5.019 Ac</text>
<text transform="translate(661.4 525.3) rotate(8)" font-size="17.479999999999997" text-anchor="middle" dy="0.36em" fill="#222" stroke="#222" stroke-width="1.6" style="font-weight:bold;font-style:italic">8-66</text>
<text transform="translate(646.4 552.5) rotate(12)" font-size="15.639999999999999" text-anchor="middle" dy="0.36em" fill="#666" stroke="#666" stroke-width="0.9" style="font-style:italic">7.218 Ac</text>
<text transform="translate(819.5 502.3) rotate(12)" font-size="17.479999999999997" text-anchor="middle" dy="0.36em" fill="#222" stroke="#222" stroke-width="1.6" style="font-weight:bold;font-style:italic">8-69-1</text>
<text transform="translate(812.4 528.0) rotate(12)" font-size="15.639999999999999" text-anchor="middle" dy="0.36em" fill="#666" stroke="#666" stroke-width="0.9" style="font-style:italic">5.00 Ac</text>
</g></svg>
</div>
<div class="tlabel" style="top:811.5px">13</div>
<div id="sscroll"></div>
<svg style="left:289px;top:182px" width="9" height="7"><path d="M4.5 0.3 L9 6.6 H0Z" fill="#8b8b8b"/></svg>
<svg style="left:289px;top:813px" width="9" height="7"><path d="M4.5 6.7 L9 0.4 H0Z" fill="#8b8b8b"/></svg>
<div class="sthumb" style="left:289px;top:448px;width:9px;height:90px"></div>
<div id="main"></div>
<div id="page">
<svg style="left:0;top:0" width="630" height="648" viewBox="346 177 630 648"><g font-family="Liberation Sans, sans-serif">
<path d="M489.4 255.0 L441.8 338.2" stroke="#444444" stroke-width="0.7" fill="none"/>
<path d="M616.0 255.0 L523.0 388.8" stroke="#444444" stroke-width="0.7" fill="none"/>
<path d="M526.0 414.0 L442.5 572.6" stroke="#444444" stroke-width="0.7" fill="none"/>
<path d="M588.8 294.4 L624.6 353.0 L637.6 393.1" stroke="#444444" stroke-width="0.7" fill="none"/>
<path d="M441.8 346.1 C448.2 349.5 466.5 359.3 480.0 366.5 C493.5 373.7 512.2 383.8 523.0 389.2 C533.8 394.6 538.8 396.7 545.0 399.2 C551.2 401.7 554.6 403.1 560.4 404.0 C566.2 404.9 573.8 405.0 580.0 404.6 C586.2 404.2 588.3 403.6 597.9 401.7 C607.5 399.8 626.4 395.8 637.6 393.1 C648.8 390.5 657.1 388.0 665.0 385.8 C672.9 383.6 672.5 383.4 685.0 380.2 C697.5 377.0 722.2 371.0 740.0 366.5 C757.8 362.0 780.8 355.9 791.6 353.4 C802.4 350.9 800.5 351.8 805.0 351.3 C809.5 350.9 813.0 350.7 818.8 350.7 C824.6 350.7 834.0 350.8 840.0 351.1 C846.0 351.4 848.5 351.2 855.0 352.5 C861.5 353.8 874.9 357.6 878.9 358.6" stroke="#444444" stroke-width="0.7" fill="none"/>
<path d="M441.8 366.6 C449.7 371.1 475.1 385.9 489.0 393.8 C502.9 401.7 515.5 409.5 525.3 414.2 C535.1 418.9 539.3 420.1 548.0 421.8 C556.7 423.5 567.9 424.4 577.4 424.5 C586.9 424.6 596.0 423.6 605.0 422.2 C614.0 420.8 627.1 416.9 631.5 415.8" stroke="#444444" stroke-width="0.7" fill="none"/>
<path d="M631.5 415.8 C640.2 413.2 665.9 405.4 684.0 400.2 C702.1 395.0 721.3 389.7 740.0 384.8 C758.7 379.9 781.8 373.7 796.0 370.8 C810.2 367.9 815.7 368.0 825.0 367.6 C834.3 367.2 847.5 368.4 852.0 368.6" stroke="#cfcfcf" stroke-width="0.9" fill="none"/>
<path d="M640.0 405.5 C648.3 403.2 673.3 396.2 690.0 391.5 C706.7 386.8 722.3 382.2 740.0 377.5 C757.7 372.8 781.0 365.9 796.0 363.0 C811.0 360.1 824.3 360.5 830.0 360.0" stroke="#ececec" stroke-width="0.8" fill="none"/>
<path d="M851.5 368.6 C853.9 369.3 861.3 371.3 866.0 372.8 C870.7 374.3 877.2 377.0 879.5 377.8" stroke="#444444" stroke-width="0.7" fill="none"/>
<path d="M812.4 254.3 L785.2 290.6 L792.7 353.4" stroke="#444444" stroke-width="0.7" fill="none"/>
<path d="M765.5 297.4 L820.1 254.3" stroke="#444444" stroke-width="0.7" fill="none"/>
<path d="M783.5 288.0 L830.0 254.3" stroke="#cfcfcf" stroke-width="0.8" fill="none"/>
<path d="M685.6 379.8 L680.4 364.3 L691.8 345.7 L726.9 338.2 L753.0 322.3" stroke="#444444" stroke-width="0.7" fill="none"/>
<path d="M879.5 319.4 L854.6 352.5" stroke="#444444" stroke-width="0.7" fill="none"/>
<path d="M700.2 397.2 L700.9 405.6" stroke="#444444" stroke-width="0.8" fill="none"/>
<path d="M702.0 500.1 C705.0 502.8 714.0 511.0 720.0 516.5 C726.0 522.0 733.9 528.8 738.3 533.0 C742.7 537.2 743.1 537.0 746.2 542.0 C749.3 547.0 753.2 555.4 757.0 563.0 C760.8 570.6 765.8 582.1 768.9 587.4 C772.0 592.7 772.3 591.6 775.7 595.0 C779.1 598.4 784.0 603.5 789.3 607.5 C794.6 611.5 800.0 615.4 807.4 618.8 C814.8 622.2 829.1 626.4 833.5 627.9" stroke="#444444" stroke-width="0.7" fill="none"/>
<path d="M879.2 538.6 L833.5 627.9" stroke="#444444" stroke-width="0.7" fill="none"/>
<path d="M699.0 590.0 L735.5 593.2" stroke="#444444" stroke-width="0.8" fill="none"/>
<path d="M695.6 589.6 L703.4 587.2 L703.0 592.9Z" fill="#1c1c1c"/>
<path d="M683.8 605.2 L833.5 627.9 L868.7 637.0 L880.0 642.6" stroke="#444444" stroke-width="0.7" fill="none"/>
<path d="M880.0 691.4 L818.8 652.8 L733.1 818.9" stroke="#444444" stroke-width="0.7" fill="none"/>
<path d="M575.2 753.8 L612.0 763.6 L733.1 818.9" stroke="#444444" stroke-width="0.7" fill="none"/>
<path d="M612.0 763.6 L586.5 820.2 L582.0 830.0" stroke="#444444" stroke-width="0.7" fill="none"/>
<path d="M595.1 726.6 L575.2 753.8" stroke="#444444" stroke-width="0.7" fill="none"/>
<path d="M595.1 726.6 L652.3 647.2 L683.8 605.2" stroke="#ececec" stroke-width="0.9" fill="none"/>
<path d="M564.2 776.0 L577.0 758.8" stroke="#444444" stroke-width="0.8" fill="none"/>
<path d="M578.8 756.0 L577.6 763.6 L572.9 760.0Z" fill="#1c1c1c"/>
<path d="M587.0 779.6 L606.5 766.9" stroke="#444444" stroke-width="0.8" fill="none"/>
<path d="M609.6 764.9 L605.6 771.4 L602.4 766.5Z" fill="#1c1c1c"/>
<path d="M442.5 615.4 L470.8 649.4" stroke="#444444" stroke-width="0.7" fill="none"/>
<path d="M442.5 639.2 L491.2 671.0" stroke="#444444" stroke-width="0.7" fill="none"/>
<path d="M470.8 649.4 C471.7 651.0 474.1 655.2 476.0 659.0 C477.9 662.8 480.8 666.9 482.2 672.1 C483.6 677.3 483.8 682.4 484.5 690.0 C485.2 697.6 486.8 709.2 486.7 717.5 C486.6 725.8 485.5 731.6 484.0 740.0 C482.5 748.4 479.3 758.8 477.6 768.0 C475.9 777.2 474.5 787.2 473.8 795.0 C473.1 802.8 473.3 809.2 473.4 815.0 C473.5 820.8 474.3 827.5 474.5 830.0" stroke="#444444" stroke-width="0.8" fill="none"/>
<path d="M491.2 670.5 L534.3 621.1" stroke="#ededed" stroke-width="0.9" fill="none"/>
<path d="M560.4 442.2 C563.2 444.3 572.7 450.2 577.4 454.7 C582.1 459.2 583.5 464.7 588.8 469.4 C594.1 474.1 603.2 477.3 609.2 483.0 C615.2 488.7 621.2 497.4 625.0 503.5 C628.8 509.6 628.1 514.0 631.9 519.3 C635.7 524.6 642.3 531.0 647.8 535.2 C653.3 539.4 659.6 542.2 665.0 544.3 C670.4 546.3 675.8 546.2 680.0 547.5 C684.2 548.8 686.7 551.8 690.0 552.0 C693.3 552.2 696.3 550.8 700.0 549.0 C703.7 547.2 710.0 542.3 712.0 541.0" stroke="#cfcfcf" stroke-width="0.8" fill="none"/>
<path d="M631.9 424.0 C632.5 426.3 635.7 433.5 635.3 437.7 C634.9 441.9 627.5 445.6 629.6 449.0 C631.7 452.4 642.0 455.5 647.8 458.1 C653.6 460.7 659.3 465.6 664.4 464.6 C669.5 463.6 675.6 458.8 678.4 452.0 C681.2 445.2 682.6 432.2 681.2 424.0 C679.8 415.8 671.9 406.5 670.0 403.0" stroke="#cfcfcf" stroke-width="0.8" fill="none"/>
<path d="M709.2 415.6 C709.0 419.3 706.9 430.5 707.8 438.0 C708.7 445.5 713.6 456.7 714.8 460.4" stroke="#e2e2e2" stroke-width="0.8" fill="none"/>
<path d="M779.2 376.4 C777.3 379.2 771.0 389.5 768.0 393.2 C765.0 396.9 762.4 394.1 761.0 398.8 C759.6 403.5 758.7 416.2 759.6 421.2 C760.5 426.2 765.8 422.8 766.6 428.6 C767.4 434.4 766.9 446.0 764.3 455.8 C761.6 465.6 755.2 476.6 750.7 487.6 C746.2 498.6 739.2 514.0 737.1 521.6 C735.0 529.2 738.1 531.1 738.3 533.0" stroke="#cfcfcf" stroke-width="0.8" fill="none"/>
<path d="M738.0 532.5 L696.3 587.4" stroke="#cfcfcf" stroke-width="0.9" fill="none"/>
<path d="M852.0 369.4 L832.4 396.0 L787.6 463.2" stroke="#e2e2e2" stroke-width="0.9" fill="none"/>
<path d="M726.0 387.6 L773.6 375.0" stroke="#e2e2e2" stroke-width="0.8" fill="none"/>
<path d="M560.4 442.2 C561.3 440.8 561.9 435.8 566.0 434.0 C570.1 432.2 579.3 431.2 585.0 431.5 C590.7 431.8 597.5 435.2 600.0 436.0" stroke="#e2e2e2" stroke-width="0.8" fill="none"/>
<path d="M888.5 243.0 L888.5 470.0" stroke="#e2e2e2" stroke-width="1.0" fill="none"/>
<path d="M891.5 300.0 L891.5 520.0" stroke="#efefef" stroke-width="1.0" fill="none"/>
<path d="M687.2 499.2 L699.0 485.2 L700.2 491.4 L724.7 487.1 L726.4 500.4 L701.8 502.8 L702.6 508.6 Z" stroke="#3a3a3a" stroke-width="2.2" fill="#fff" stroke-linejoin="miter"/><text transform="translate(708.8 495.3) rotate(-7.5)" font-size="7.5" font-weight="bold" text-anchor="middle" dy="0.36em" fill="#333">Subject</text><path d="M703 486.5 L704.2 500" stroke="#555" stroke-width="0.6"/>
<text transform="translate(457.4 768) rotate(86)" font-size="5" text-anchor="middle" fill="#555" font-style="italic">Towle Brook</text>
<path d="M458.3 800 V822" stroke="#e6e6e6" stroke-width="0.8" stroke-dasharray="1.5 1.5"/>
<text transform="translate(485.6 359.3) rotate(30)" font-size="12.4" text-anchor="middle" dy="0.36em" fill="#1a1a1a" stroke="#1a1a1a" stroke-width="0.22">252.12'</text>
<text transform="translate(459.0 390.4) rotate(28)" font-size="12.4" text-anchor="middle" dy="0.36em" fill="#1a1a1a" stroke="#1a1a1a" stroke-width="0.22">367.0'</text>
<text transform="translate(569.5 338.2) rotate(-55)" font-size="12.4" text-anchor="middle" dy="0.36em" fill="#1a1a1a" stroke="#1a1a1a" stroke-width="0.22">314.50'</text>
<text transform="translate(608.0 309.9) rotate(60)" font-size="12.0" text-anchor="middle" dy="0.36em" fill="#1a1a1a" stroke="#1a1a1a" stroke-width="0.22">196.47'</text>
<text transform="translate(636.0 364.3) rotate(73)" font-size="12.0" text-anchor="middle" dy="0.36em" fill="#1a1a1a" stroke="#1a1a1a" stroke-width="0.22">100.85'</text>
<text transform="translate(579.7 396.5) rotate(0)" font-size="11.6" text-anchor="middle" dy="0.36em" fill="#1a1a1a" stroke="#1a1a1a" stroke-width="0.22">312.14'</text>
<text transform="translate(778.4 328.0) rotate(80)" font-size="13.0" text-anchor="middle" dy="0.36em" fill="#1a1a1a" stroke="#1a1a1a" stroke-width="0.22">164.66'</text>
<text transform="translate(824.5 342.1) rotate(0)" font-size="13.0" text-anchor="middle" dy="0.36em" fill="#1a1a1a" stroke="#1a1a1a" stroke-width="0.22">202.16'</text>
<text transform="translate(714.4 363.2) rotate(-14)" font-size="13.0" text-anchor="middle" dy="0.36em" fill="#1a1a1a" stroke="#1a1a1a" stroke-width="0.22">435.92'</text>
<text transform="translate(733.7 398.8) rotate(-5)" font-size="13.0" text-anchor="middle" dy="0.36em" fill="#1a1a1a" stroke="#1a1a1a" stroke-width="0.22">566.47'</text>
<text transform="translate(840.3 405.1) rotate(-58)" font-size="13.0" text-anchor="middle" dy="0.36em" fill="#1a1a1a" stroke="#1a1a1a" stroke-width="0.22">150.97'</text>
<text transform="translate(805.0 419.5) rotate(-58)" font-size="13.0" text-anchor="middle" dy="0.36em" fill="#1a1a1a" stroke="#1a1a1a" stroke-width="0.22">399.25'</text>
<text transform="translate(803.4 457.0) rotate(-58)" font-size="13.0" text-anchor="middle" dy="0.36em" fill="#1a1a1a" stroke="#1a1a1a" stroke-width="0.22">243.53'</text>
<text transform="translate(575.2 435.4) rotate(0)" font-size="12.6" text-anchor="middle" dy="0.36em" fill="#1a1a1a" stroke="#1a1a1a" stroke-width="0.22">300'</text>
<text transform="translate(617.1 454.7) rotate(-86)" font-size="13.0" text-anchor="middle" dy="0.36em" fill="#1a1a1a" stroke="#1a1a1a" stroke-width="0.22">300.00'</text>
<text transform="translate(485.6 472.8) rotate(-60)" font-size="12.6" text-anchor="middle" dy="0.36em" fill="#1a1a1a" stroke="#1a1a1a" stroke-width="0.22">325.0'</text>
<text transform="translate(480.4 527.3) rotate(-62)" font-size="12.6" text-anchor="middle" dy="0.36em" fill="#1a1a1a" stroke="#1a1a1a" stroke-width="0.22">643.05'</text>
<text transform="translate(551.4 587.4) rotate(-55)" font-size="12.6" text-anchor="middle" dy="0.36em" fill="#1a1a1a" stroke="#1a1a1a" stroke-width="0.22">563.47'</text>
<text transform="translate(752.5 502.3) rotate(-65)" font-size="12.6" text-anchor="middle" dy="0.36em" fill="#1a1a1a" stroke="#1a1a1a" stroke-width="0.22">110.86'</text>
<text transform="translate(767.7 513.0) rotate(-65)" font-size="12.6" text-anchor="middle" dy="0.36em" fill="#1a1a1a" stroke="#1a1a1a" stroke-width="0.22">118.53'</text>
<text transform="translate(720.1 544.7) rotate(-40)" font-size="12.6" text-anchor="middle" dy="0.36em" fill="#1a1a1a" stroke="#1a1a1a" stroke-width="0.22">151.96'</text>
<text transform="translate(730.3 561.3) rotate(-42)" font-size="12.6" text-anchor="middle" dy="0.36em" fill="#1a1a1a" stroke="#1a1a1a" stroke-width="0.22">149.45'</text>
<text transform="translate(856.9 562.4) rotate(-60)" font-size="12.6" text-anchor="middle" dy="0.36em" fill="#1a1a1a" stroke="#1a1a1a" stroke-width="0.22">412.82'</text>
<text transform="translate(754.1 594.2) rotate(2)" font-size="12.6" text-anchor="middle" dy="0.36em" fill="#1a1a1a" stroke="#1a1a1a" stroke-width="0.22">100.00'</text>
<text transform="translate(750.7 627.2) rotate(8)" font-size="12.6" text-anchor="middle" dy="0.36em" fill="#1a1a1a" stroke="#1a1a1a" stroke-width="0.22">401.54'</text>
<text transform="translate(851.7 660.8) rotate(30)" font-size="12.6" text-anchor="middle" dy="0.36em" fill="#1a1a1a" stroke="#1a1a1a" stroke-width="0.22">79.47'</text>
<text transform="translate(765.5 733.4) rotate(-62)" font-size="12.6" text-anchor="middle" dy="0.36em" fill="#1a1a1a" stroke="#1a1a1a" stroke-width="0.22">499.01'</text>
<text transform="translate(671.3 641.5) rotate(-58)" font-size="12.6" text-anchor="middle" dy="0.36em" fill="#1a1a1a" stroke="#1a1a1a" stroke-width="0.22">248.91'</text>
<text transform="translate(661.0 617.5) rotate(-55)" font-size="12.6" text-anchor="middle" dy="0.36em" fill="#1a1a1a" stroke="#1a1a1a" stroke-width="0.22">349.33'</text>
<text transform="translate(461.8 639.2) rotate(33)" font-size="12.6" text-anchor="middle" dy="0.36em" fill="#1a1a1a" stroke="#1a1a1a" stroke-width="0.22">234.92'</text>
<text transform="translate(455.0 663.0) rotate(30)" font-size="12.6" text-anchor="middle" dy="0.36em" fill="#1a1a1a" stroke="#1a1a1a" stroke-width="0.22">2.45'</text>
<text transform="translate(541.1 689.1) rotate(25)" font-size="12.6" text-anchor="middle" dy="0.36em" fill="#1a1a1a" stroke="#1a1a1a" stroke-width="0.22">272.91'</text>
<text transform="translate(616.0 683.5) rotate(-55)" font-size="12.6" text-anchor="middle" dy="0.36em" fill="#1a1a1a" stroke="#1a1a1a" stroke-width="0.22">175.55'</text>
<text transform="translate(629.2 698.2) rotate(-55)" font-size="12.6" text-anchor="middle" dy="0.36em" fill="#1a1a1a" stroke="#1a1a1a" stroke-width="0.22">235.60'</text>
<text transform="translate(565.6 743.6) rotate(-55)" font-size="12.6" text-anchor="middle" dy="0.36em" fill="#1a1a1a" stroke="#1a1a1a" stroke-width="0.22">61.24'</text>
<text transform="translate(610.8 756.0) rotate(15)" font-size="12.6" text-anchor="middle" dy="0.36em" fill="#1a1a1a" stroke="#1a1a1a" stroke-width="0.22">125.30'</text>
<text transform="translate(548.9 790.7) rotate(-50)" font-size="12.6" text-anchor="middle" dy="0.36em" fill="#1a1a1a" stroke="#1a1a1a" stroke-width="0.22">125.03'</text>
<text transform="translate(572.9 794.4) rotate(-42)" font-size="12.6" text-anchor="middle" dy="0.36em" fill="#1a1a1a" stroke="#1a1a1a" stroke-width="0.22">14.00'</text>
<text transform="translate(702.2 795.3) rotate(20)" font-size="12.6" text-anchor="middle" dy="0.36em" fill="#1a1a1a" stroke="#1a1a1a" stroke-width="0.22">322.42'</text>
<text transform="translate(593.3 355.2) rotate(12)" font-size="14.5" text-anchor="middle" dy="0.36em" fill="#1a1a1a" stroke="#1a1a1a" stroke-width="0.35" style="font-weight:bold;font-style:italic">8-65</text>
<text transform="translate(592.2 372.2) rotate(12)" font-size="12.2" text-anchor="middle" dy="0.36em" fill="#1a1a1a" stroke="#1a1a1a" stroke-width="0.22" style="font-style:italic">1.13 Ac</text>
<text transform="translate(861.8 264.5) rotate(12)" font-size="15" text-anchor="middle" dy="0.36em" fill="#1a1a1a" stroke="#1a1a1a" stroke-width="0.35" style="font-weight:bold;font-style:italic">8-67.</text>
<text transform="translate(857.6 285.4) rotate(12)" font-size="13.2" text-anchor="middle" dy="0.36em" fill="#1a1a1a" stroke="#1a1a1a" stroke-width="0.22" style="font-style:italic">4.24 A</text>
<text transform="translate(549.1 508.0) rotate(10)" font-size="15.2" text-anchor="middle" dy="0.36em" fill="#1a1a1a" stroke="#1a1a1a" stroke-width="0.35" style="font-weight:bold;font-style:italic">8-66-1</text>
<text transform="translate(541.1 528.4) rotate(12)" font-size="13.6" text-anchor="middle" dy="0.36em" fill="#1a1a1a" stroke="#1a1a1a" stroke-width="0.22" style="font-style:italic">5.019 Ac</text>
<text transform="translate(661.4 525.3) rotate(8)" font-size="15.2" text-anchor="middle" dy="0.36em" fill="#1a1a1a" stroke="#1a1a1a" stroke-width="0.35" style="font-weight:bold;font-style:italic">8-66</text>
<text transform="translate(646.4 552.5) rotate(12)" font-size="13.6" text-anchor="middle" dy="0.36em" fill="#1a1a1a" stroke="#1a1a1a" stroke-width="0.22" style="font-style:italic">7.218 Ac</text>
<text transform="translate(819.5 502.3) rotate(12)" font-size="15.2" text-anchor="middle" dy="0.36em" fill="#1a1a1a" stroke="#1a1a1a" stroke-width="0.35" style="font-weight:bold;font-style:italic">8-69-1</text>
<text transform="translate(812.4 528.0) rotate(12)" font-size="13.6" text-anchor="middle" dy="0.36em" fill="#1a1a1a" stroke="#1a1a1a" stroke-width="0.22" style="font-style:italic">5.00 Ac</text>
</g></svg>
</div>
<div id="mscroll"></div>
<svg style="left:1023px;top:182px" width="9" height="7"><path d="M4.5 0.3 L9 6.6 H0Z" fill="#8b8b8b"/></svg>
<svg style="left:1023px;top:813px" width="9" height="7"><path d="M4.5 6.7 L9 0.4 H0Z" fill="#8b8b8b"/></svg>
<div class="sthumb" style="left:1023px;top:516px;width:9px;height:21px"></div>
</div></div></div>
</body>
</html>
